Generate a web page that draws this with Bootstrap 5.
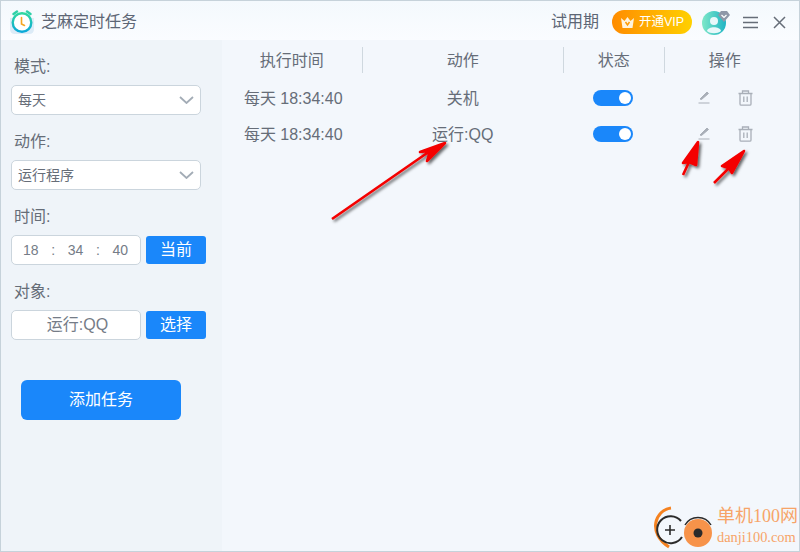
<!DOCTYPE html>
<html lang="zh-CN">
<head>
    <meta charset="UTF-8">
    <title>芝麻定时任务</title>
    <meta name="viewport" content="width=device-width, initial-scale=1.0">
    <link href="https://cdn.jsdelivr.net/npm/bootstrap@5.3.0/dist/css/bootstrap.min.css" rel="stylesheet">
    <style>
        html, body { height: 100%; overflow: hidden; }
        body { font-family: "Liberation Sans", "Noto Sans CJK SC", sans-serif; color: #666d78; background: #f3f7fc; }
        .app-win { position: relative; width: 800px; height: 552px; border: 1px solid #c6d2da; overflow: hidden; }
        .title-bar { height: 39px; padding-top: 3px; background: linear-gradient(#f4f9fd, #fafcff); }
        .app-name { font-size: 16px; color: #5d6675; margin-left: 7px; }
        .app-logo { margin-left: 9px; }
        .trial { font-size: 16px; color: #5d6675; margin-right: 13px; }
        .vip-btn { width: 80px; height: 24px; border-radius: 12px; background: linear-gradient(90deg, #ff8c00, #ffd000); color: #fff; font-size: 12.5px; margin-right: 10px; }
        .avatar-wrap { position: relative; width: 24px; height: 24px; margin-right: 17px; }
        .avatar-tag { position: absolute; right: -4px; top: 1px; }
        .menu-ic { margin-right: 15px; }
        .close-ic { margin-right: 13px; }
        .side-pane { width: 221px; height: 512px; background: #eff4f9; padding: 15px 15px 0 10px; }
        .main-pane { width: 578px; height: 512px; background: #f3f7fc; }
        .field-label { font-size: 16px; line-height: 22px; padding-top: 1px; margin: 0 0 7px 3px; color: #666d78; }
        .pick-box { width: 190px; height: 30px; background: #fff; border: 1px solid #cbd5dd; border-radius: 5px; font-size: 14px; padding: 0 6px 0 6px; margin-bottom: 15px; }
        .time-box { width: 130px; height: 30px; background: #fff; border: 1px solid #cbd5dd; border-radius: 5px; font-size: 14px; padding: 0 12px 0 11px; color: #757c87; }
        .obj-box { width: 130px; height: 30px; padding-left: 3px; background: #fff; border: 1px solid #cbd5dd; border-radius: 5px; font-size: 16px; color: #757c87; }
        .blue-btn { width: 60px; height: 28px; background: #1a87fa; color: #fff; border: 0; border-radius: 3px; font-size: 16px; padding: 0; margin-left: 5px; }
        .blue-btn:hover { background: #1a87fa; color: #fff; }
        .add-btn { width: 160px; height: 40px; background: #1a87fa; color: #fff; border: 0; border-radius: 6px; font-size: 16px; padding: 0; margin: 40px 0 0 10px; }
        .add-btn:hover { background: #1a87fa; color: #fff; }
        .form-gap { margin-bottom: 15px; }
        .task-head { height: 40px; font-size: 16px; color: #666d78; }
        .task-row { height: 36px; font-size: 16px; color: #666d78; }
        .col-time { width: 140px; }
        .col-act { width: 200px; }
        .col-state { width: 100px; }
        .col-ops { width: 120px; }
        .task-head .col-time, .task-head .col-act, .task-head .col-state, .task-head .col-ops { padding-top: 2px; }
        .task-row .col-time { width: 141px; padding: 2px 0 0 2px; }
        .task-row .col-act { padding-top: 2px; }
        .task-row .col-state { width: 101px; }
        .ops-cell { gap: 28px; padding-left: 4px; }
        .col-sep { height: 26px; border-left: 1px solid #cfd8df; }
        .switch-pill { width: 40px; height: 16px; border-radius: 8px; background: #1a87fa; position: relative; }
        .switch-pill::after { content: ""; position: absolute; right: 2px; top: 2px; width: 12px; height: 12px; border-radius: 50%; background: #fff; }
        .arrow-layer { position: absolute; left: 0; top: 0; pointer-events: none; }
        .wm-box { position: absolute; right: 0; bottom: 0; width: 150px; height: 48px; }
        .wm-logo { position: absolute; left: 0; top: 0; }
        .wm-cn { position: absolute; left: 68px; top: 2px; font-size: 18px; line-height: 22px; color: #f7a468; white-space: nowrap; font-family: "Liberation Serif", "Noto Sans CJK SC", serif; }
        .wm-en { position: absolute; left: 68px; top: 25px; font-size: 14.4px; line-height: 18px; color: #f7a468; white-space: nowrap; font-family: "Liberation Serif", serif; }
    </style>
</head>
<body>

<div class="app-win">
    <!-- title bar -->
    <div class="title-bar d-flex align-items-center">
        <svg class="app-logo" width="24" height="24" viewBox="0 0 24 24">
            <path d="M0 8 V19 Q0 24 5 24 H19 Q24 24 24 19 V8 Z" fill="#dcebf7"/>
            <path d="M3.5 4 L7 1.5 M20.5 4 L17 1.5" stroke="#2fd0a8" stroke-width="2.4" stroke-linecap="round"/>
            <circle cx="12" cy="12.5" r="9.3" fill="#fff" stroke="url(#logoGrad)" stroke-width="2.4"/>
            <path d="M11.5 7.5 V14 L14.5 15.5" fill="none" stroke="#f5a623" stroke-width="1.6" stroke-linecap="round"/>
            <defs><linearGradient id="logoGrad" x1="0" y1="0" x2="0" y2="1"><stop offset="0" stop-color="#2fd8a0"/><stop offset="1" stop-color="#0aa8d8"/></linearGradient></defs>
        </svg>
        <span class="app-name">芝麻定时任务</span>
        <div class="ms-auto d-flex align-items-center">
            <span class="trial">试用期</span>
            <div class="vip-btn d-flex align-items-center justify-content-center gap-1">
                <svg width="15" height="13" viewBox="0 0 15 13">
                    <path d="M1 2 L4.5 5 L7.5 1 L10.5 5 L14 2 L12.5 12 H2.5 Z" fill="#fff3dc"/>
                    <path d="M5.5 6 L7.5 9 L9.5 6" fill="none" stroke="#ff9a00" stroke-width="1.4"/>
                </svg>
                <span>开通VIP</span>
            </div>
            <div class="avatar-wrap">
                <svg width="24" height="24" viewBox="0 0 24 24">
                    <defs><linearGradient id="avGrad" x1="0" y1="0" x2="1" y2="0"><stop offset="0" stop-color="#7fe8c8"/><stop offset="1" stop-color="#1fb4c4"/></linearGradient></defs>
                    <circle cx="12" cy="12" r="12" fill="url(#avGrad)"/>
                    <circle cx="12" cy="10" r="4" fill="#e8f8fa"/>
                    <path d="M5 20 C6 15 18 15 19 20 C16 23 8 23 5 20 Z" fill="#e8f8fa"/>
                </svg>
                <svg class="avatar-tag" width="12" height="11" viewBox="0 0 12 11">
                    <path d="M3 0 H9 L12 4 L6 11 L0 4 Z" fill="#8e97a8"/>
                    <path d="M3.5 4 L6 6.5 L8.5 4" fill="none" stroke="#fff" stroke-width="1.2"/>
                </svg>
            </div>
            <svg class="menu-ic" width="15" height="13" viewBox="0 0 15 13">
                <path d="M0 1.5 H15 M0 6.5 H15 M0 11.5 H15" stroke="#666d78" stroke-width="1.5"/>
            </svg>
            <svg class="close-ic" width="13" height="13" viewBox="0 0 13 13">
                <path d="M1 1 L12 12 M12 1 L1 12" stroke="#666d78" stroke-width="1.5"/>
            </svg>
        </div>
    </div>

    <div class="d-flex">
        <!-- left form -->
        <div class="side-pane">
            <div class="field-label">模式:</div>
            <div class="pick-box d-flex align-items-center justify-content-between">
                <span>每天</span>
                <svg width="15" height="8" viewBox="0 0 15 8"><path d="M1 1 L7.5 7 L14 1" fill="none" stroke="#a3acb6" stroke-width="1.8"/></svg>
            </div>
            <div class="field-label">动作:</div>
            <div class="pick-box d-flex align-items-center justify-content-between">
                <span>运行程序</span>
                <svg width="15" height="8" viewBox="0 0 15 8"><path d="M1 1 L7.5 7 L14 1" fill="none" stroke="#a3acb6" stroke-width="1.8"/></svg>
            </div>
            <div class="field-label">时间:</div>
            <div class="d-flex align-items-center form-gap">
                <div class="time-box d-flex align-items-center justify-content-between">
                    <span>18</span><span>:</span><span>34</span><span>:</span><span>40</span>
                </div>
                <button class="btn blue-btn" type="button">当前</button>
            </div>
            <div class="field-label">对象:</div>
            <div class="d-flex align-items-center">
                <div class="obj-box d-flex align-items-center justify-content-center">运行:QQ</div>
                <button class="btn blue-btn" type="button">选择</button>
            </div>
            <button class="btn add-btn" type="button">添加任务</button>
        </div>

        <!-- task table -->
        <div class="main-pane">
            <div class="task-head d-flex align-items-center text-center">
                <div class="col-time">执行时间</div>
                <div class="col-sep"></div>
                <div class="col-act">动作</div>
                <div class="col-sep"></div>
                <div class="col-state">状态</div>
                <div class="col-sep"></div>
                <div class="col-ops">操作</div>
            </div>
            <div class="task-row d-flex align-items-center text-center">
                <div class="col-time">每天 18:34:40</div>
                <div class="col-act">关机</div>
                <div class="col-state d-flex justify-content-center"><div class="switch-pill"></div></div>
                <div class="col-ops ops-cell d-flex justify-content-center">
                    <svg width="12" height="14" viewBox="0 0 12 14"><path d="M2 9 L9 2 L10.5 3.5 L3.5 9.5 Z M0.5 13 H11.5" fill="#a9afb8" stroke="#a9afb8" stroke-width="1"/></svg>
                    <svg width="15" height="16" viewBox="0 0 15 16"><path d="M0.5 3.5 H14.5 M4.5 3.5 V1 H10.5 V3.5 M2 3.5 V14 Q2 15.2 3.2 15.2 H11.8 Q13 15.2 13 14 V3.5 M5.8 6.5 V12 M9.2 6.5 V12" fill="none" stroke="#a9afb8" stroke-width="1.3"/></svg>
                </div>
            </div>
            <div class="task-row d-flex align-items-center text-center">
                <div class="col-time">每天 18:34:40</div>
                <div class="col-act">运行:QQ</div>
                <div class="col-state d-flex justify-content-center"><div class="switch-pill"></div></div>
                <div class="col-ops ops-cell d-flex justify-content-center">
                    <svg width="12" height="14" viewBox="0 0 12 14"><path d="M2 9 L9 2 L10.5 3.5 L3.5 9.5 Z M0.5 13 H11.5" fill="#a9afb8" stroke="#a9afb8" stroke-width="1"/></svg>
                    <svg width="15" height="16" viewBox="0 0 15 16"><path d="M0.5 3.5 H14.5 M4.5 3.5 V1 H10.5 V3.5 M2 3.5 V14 Q2 15.2 3.2 15.2 H11.8 Q13 15.2 13 14 V3.5 M5.8 6.5 V12 M9.2 6.5 V12" fill="none" stroke="#a9afb8" stroke-width="1.3"/></svg>
                </div>
            </div>
        </div>
    </div>

    <!-- red arrows drawn over the screenshot -->
    <svg class="arrow-layer" width="800" height="552" viewBox="1 1 800 552">
        <defs><filter id="arrowShadow" x="-40%" y="-40%" width="180%" height="180%"><feDropShadow dx="2" dy="2" stdDeviation="1.6" flood-color="#000" flood-opacity="0.6"/></filter></defs>
        <g fill="#f40000" stroke="#f40000" stroke-linejoin="round" filter="url(#arrowShadow)">
            <path d="M332 219 L430 151 L427 161 L445 143 L420 152 L430 151" stroke-width="2.6"/>
            <path d="M683 175 L689 162 L696 165 L698 142 L683 163 L689 162" stroke-width="2.6"/>
            <path d="M714 183 L729 168 L732 173 L744 151 L722 166 L729 168" stroke-width="2.6"/>
        </g>
    </svg>

    <!-- site watermark -->
    <div class="wm-box">
        <svg class="wm-logo" width="68" height="48" viewBox="0 0 68 48">
            <path d="M22 5 C6 7 -2 30 20 44" fill="none" stroke="#f58220" stroke-width="3"/>
            <path d="M32 18 A13.5 13.5 0 1 0 33 34" fill="none" stroke="#2b2b2b" stroke-width="2"/>
            <path d="M16 27 H26 M21 22 V32" stroke="#2b2b2b" stroke-width="1.6"/>
            <circle cx="49" cy="30" r="14" fill="#f7934a"/>
            <path d="M36 22 A15 15 0 0 1 62 22" fill="none" stroke="#2b2b2b" stroke-width="1.5"/>
            <circle cx="49" cy="30" r="4.5" fill="#2b2b2b"/>
        </svg>
        <div class="wm-cn">单机100网</div>
        <div class="wm-en">danji100.com</div>
    </div>
</div>

<script src="https://cdn.jsdelivr.net/npm/bootstrap@5.3.0/dist/js/bootstrap.bundle.min.js"></script>
</body>
</html>
